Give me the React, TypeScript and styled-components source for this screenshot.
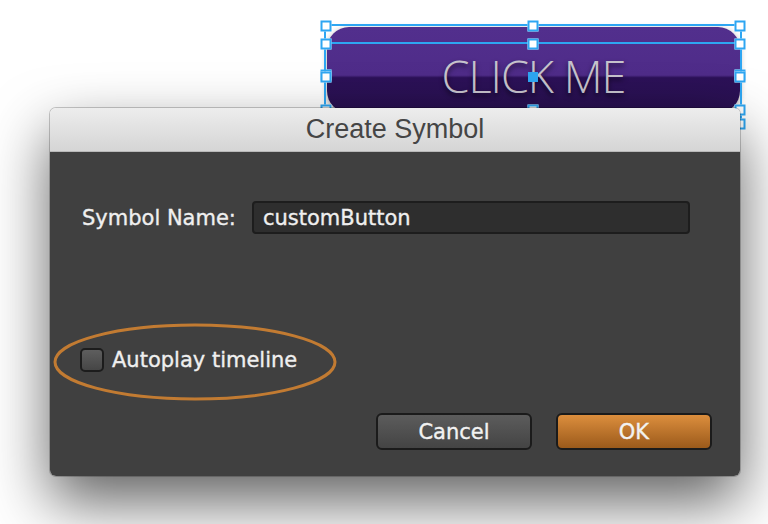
import styled, { createGlobalStyle } from "styled-components";

const GlobalStyle = createGlobalStyle`
  html, body {
    margin: 0;
    padding: 0;
    background: #ffffff;
  }
  body {
    font-family: "DejaVu Sans", "Liberation Sans", sans-serif;
    overflow: hidden;
  }
`;

const BLUE = "#2ea6f2";

// handle spots on a selection frame, in percent of its box
const EDGE_HANDLES: [number, number][] = [
  [0, 0], [50, 0], [100, 0],
  [0, 50], [100, 50],
  [0, 100], [50, 100], [100, 100],
];

export default function App() {
  return (
    <>
      <GlobalStyle />
      <Canvas>
        <StageButton>CLICK ME</StageButton>

        <SelectionBox $top={24} $height={102}>
          {EDGE_HANDLES.map(([x, y]) => (
            <Handle key={`${x}-${y}`} $x={x} $y={y} />
          ))}
        </SelectionBox>
        <SelectionBox $top={42} $height={70}>
          {EDGE_HANDLES.map(([x, y]) => (
            <Handle key={`${x}-${y}`} $x={x} $y={y} />
          ))}
          <Handle $x={50} $y={50} $filled />
        </SelectionBox>

        <Dialog>
          <TitleBar>Create Symbol</TitleBar>
          <DialogBody>
            <NameRow>
              <Label>Symbol Name:</Label>
              <TextInput defaultValue="customButton" spellCheck={false} />
            </NameRow>

            <CheckRow>
              <Highlight width="284" height="78" viewBox="0 0 284 78">
                <ellipse cx="142" cy="39" rx="140" ry="37" fill="none" stroke="#c27b32" strokeWidth="3" />
              </Highlight>
              <CheckBox />
              <Label>Autoplay timeline</Label>
            </CheckRow>

            <ButtonRow>
              <DialogButton>Cancel</DialogButton>
              <DialogButton $primary>OK</DialogButton>
            </ButtonRow>
          </DialogBody>
        </Dialog>
      </Canvas>
    </>
  );
}

const Canvas = styled.div`
  position: relative;
  width: 768px;
  height: 524px;
  overflow: hidden;
  background: #ffffff;
`;

const StageButton = styled.div`
  position: absolute;
  left: 327px;
  top: 27px;
  width: 413px;
  height: 86px;
  box-sizing: border-box;
  padding-bottom: 15px;
  border-radius: 22px;
  background: linear-gradient(
    to bottom,
    #522f8d 0%,
    #4f2c89 56%,
    #2c1158 59%,
    #28104f 100%
  );
  box-shadow: 0 2px 6px rgba(0, 0, 0, 0.35);
  display: flex;
  align-items: flex-end;
  justify-content: center;
  font-family: "Open Sans", "Liberation Sans", sans-serif;
  font-weight: 300;
  font-size: 45px;
  line-height: 1;
  letter-spacing: -1px;
  color: #c6c3cc;
  text-shadow: 0 3px 5px rgba(0, 0, 0, 0.65);
`;

const SelectionBox = styled.div<{ $top: number; $height: number }>`
  position: absolute;
  left: 324px;
  top: ${(p) => p.$top}px;
  width: 418px;
  height: ${(p) => p.$height}px;
  box-sizing: border-box;
  border: 2px solid ${BLUE};
  pointer-events: none;
`;

const Handle = styled.span<{ $x: number; $y: number; $filled?: boolean }>`
  position: absolute;
  left: ${(p) => p.$x}%;
  top: ${(p) => p.$y}%;
  width: ${(p) => (p.$filled ? 10 : 11)}px;
  height: ${(p) => (p.$filled ? 10 : 11)}px;
  box-sizing: border-box;
  transform: translate(-50%, -50%);
  background: ${(p) => (p.$filled ? BLUE : "#ffffff")};
  border: 2px solid ${BLUE};
`;

const Dialog = styled.div`
  position: absolute;
  left: 50px;
  top: 108px;
  width: 690px;
  height: 368px;
  display: flex;
  flex-direction: column;
  border-radius: 6px;
  overflow: hidden;
  box-shadow: 0 26px 60px rgba(0, 0, 0, 0.62), 0 0 0 1px rgba(0, 0, 0, 0.2);
`;

const TitleBar = styled.div`
  height: 44px;
  flex: none;
  box-sizing: border-box;
  display: flex;
  align-items: center;
  justify-content: center;
  background: linear-gradient(to bottom, #ededed, #d5d5d5);
  border-bottom: 1px solid #b9b9b9;
  font-family: "Liberation Sans", Arial, sans-serif;
  font-size: 27px;
  color: #454545;
`;

const DialogBody = styled.div`
  flex: 1;
  display: grid;
  grid-template-rows: auto 1fr auto;
  align-items: end;
  padding: 49px 28px 26px 32px;
  background: #404040;
`;

const NameRow = styled.div`
  align-self: start;
  display: flex;
  align-items: center;
  gap: 16px;
`;

const Label = styled.span`
  font-size: 21px;
  color: #efefef;
  -webkit-text-stroke: 0.35px #efefef;
  white-space: nowrap;
`;

const TextInput = styled.input`
  width: 438px;
  height: 33px;
  box-sizing: border-box;
  padding: 0 9px;
  border: 2px solid #1d1d1d;
  border-radius: 4px;
  background: #2e2e2e;
  color: #efefef;
  -webkit-text-stroke: 0.35px #efefef;
  font-family: "DejaVu Sans", sans-serif;
  font-size: 21px;
  outline: none;
`;

const CheckRow = styled.div`
  position: relative;
  display: flex;
  align-items: center;
  gap: 8px;
  height: 24px;
  margin-left: -2px;
`;

const Highlight = styled.svg`
  position: absolute;
  left: -27px;
  top: -25px;
  pointer-events: none;
`;

const CheckBox = styled.span`
  width: 24px;
  height: 24px;
  box-sizing: border-box;
  border: 2px solid #1c1c1c;
  border-radius: 5px;
  background: linear-gradient(to bottom, #5e5e5e, #464646);
`;

const ButtonRow = styled.div`
  display: flex;
  justify-content: flex-end;
  gap: 24px;
  padding-top: 41px;
`;

const DialogButton = styled.button<{ $primary?: boolean }>`
  width: 156px;
  height: 37px;
  box-sizing: border-box;
  border: 2px solid #1b1b1b;
  border-radius: 6px;
  background: ${(p) =>
    p.$primary
      ? "linear-gradient(to bottom, #dc8e3d, #9b5a1b)"
      : "linear-gradient(to bottom, #5c5c5c, #444444)"};
  color: #f2f2f2;
  -webkit-text-stroke: 0.35px #f2f2f2;
  font-family: "DejaVu Sans", sans-serif;
  font-size: 21px;
  padding: 0;
`;
